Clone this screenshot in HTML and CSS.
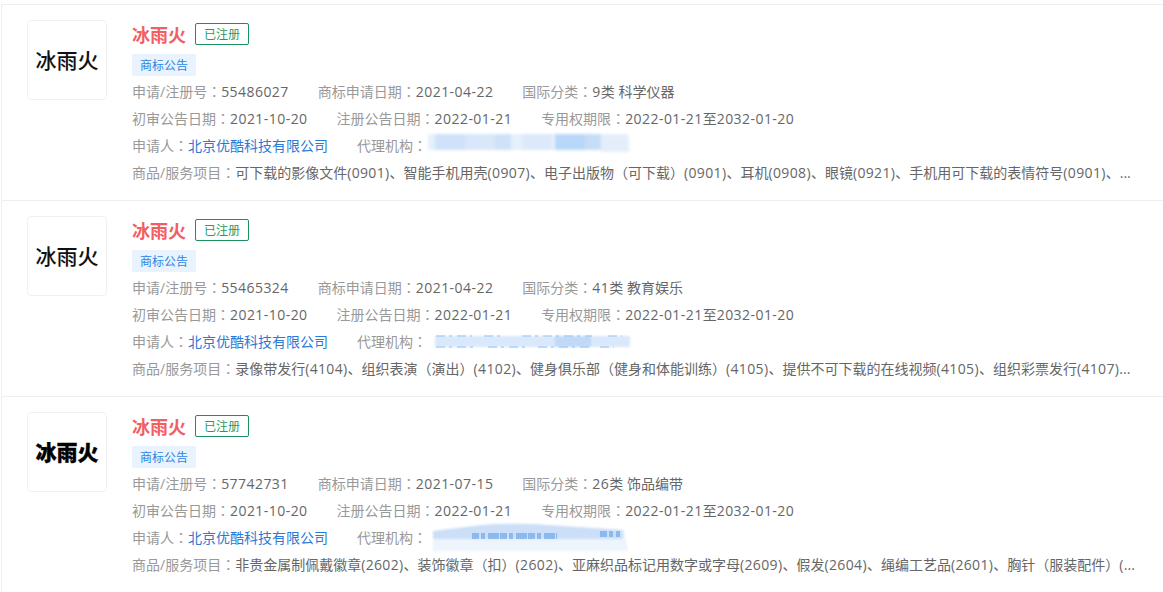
FILE: index.html
```html
<!DOCTYPE html>
<html>
<head>
    <meta charset="utf-8">
    <title>商标列表</title>
    <link rel="stylesheet" href="styles.css">
</head>
<body>
    <div class="tm-list">
        <div class="tm-item">
            <div class="tm-logo">冰雨火</div>
            <div class="tm-info">
                <div class="tm-title"><span class="tm-name">冰雨火</span><span class="tm-status">已注册</span></div>
                <div class="tm-notice"><span>商标公告</span></div>
                <div class="tm-row">
                    <span><i>申请/注册号<em>：</em></i><b>55486027</b></span>
                    <span><i>商标申请日期<em>：</em></i><b>2021-04-22</b></span>
                    <span><i>国际分类<em>：</em></i><b>9</b>类 科学仪器</span>
                </div>
                <div class="tm-row">
                    <span><i>初审公告日期<em>：</em></i><b>2021-10-20</b></span>
                    <span><i>注册公告日期<em>：</em></i><b>2022-01-21</b></span>
                    <span><i>专用权期限<em>：</em></i><b>2022-01-21</b>至<b>2032-01-20</b></span>
                </div>
                <div class="tm-row">
                    <span><i>申请人<em>：</em></i><a href="#">北京优酷科技有限公司</a></span>
                    <span class="tm-agent"><i>代理机构<em>：</em></i>
                        <svg class="smudge" width="220" height="40" viewBox="0 0 220 40">
                            <defs>
                                <filter id="soft1"><feGaussianBlur stdDeviation="1.5"/></filter>
                            </defs>
                            <g filter="url(#soft1)">
                                <rect x="6" y="8" width="200" height="16" fill="#e6f0fb"/>
                                <rect x="13" y="8" width="30" height="16" fill="#cfe2f9"/>
                                <rect x="43" y="8" width="30" height="16" fill="#d8e7fa"/>
                                <rect x="73" y="8" width="16" height="16" fill="#cfe1f8"/>
                                <rect x="100" y="8" width="30" height="16" fill="#dbe9fa"/>
                                <rect x="133" y="8" width="30" height="16" fill="#b9d7f8"/>
                                <rect x="163" y="8" width="16" height="16" fill="#c6ddf8"/>
                                <rect x="179" y="10" width="28" height="16" fill="#e4eefb"/>
                            </g>
                        </svg>
                    </span>
                </div>
                <div class="tm-row tm-goods"><span><i>商品/服务项目<em>：</em></i>可下载的影像文件<b>(0901)</b>、智能手机用壳<b>(0907)</b>、电子出版物<em>（</em>可下载<em>）</em><b>(0901)</b>、耳机<b>(0908)</b>、眼镜<b>(0921)</b>、手机用可下载的表情符号<b>(0901)</b>、...</span></div>
            </div>
        </div>

        <div class="tm-item">
            <div class="tm-logo">冰雨火</div>
            <div class="tm-info">
                <div class="tm-title"><span class="tm-name">冰雨火</span><span class="tm-status">已注册</span></div>
                <div class="tm-notice"><span>商标公告</span></div>
                <div class="tm-row">
                    <span><i>申请/注册号<em>：</em></i><b>55465324</b></span>
                    <span><i>商标申请日期<em>：</em></i><b>2021-04-22</b></span>
                    <span><i>国际分类<em>：</em></i><b>41</b>类 教育娱乐</span>
                </div>
                <div class="tm-row">
                    <span><i>初审公告日期<em>：</em></i><b>2021-10-20</b></span>
                    <span><i>注册公告日期<em>：</em></i><b>2022-01-21</b></span>
                    <span><i>专用权期限<em>：</em></i><b>2022-01-21</b>至<b>2032-01-20</b></span>
                </div>
                <div class="tm-row">
                    <span><i>申请人<em>：</em></i><a href="#">北京优酷科技有限公司</a></span>
                    <span class="tm-agent"><i>代理机构<em>：</em></i>
                        <svg class="smudge" width="220" height="40" viewBox="0 0 220 40">
                            <defs>
                                <filter id="soft2"><feGaussianBlur stdDeviation="1"/></filter>
                            </defs>
                            <g filter="url(#soft2)">
                                <rect x="13" y="14" width="195" height="11" fill="#d9e8fa"/>
                                <rect x="133" y="14" width="36" height="11" fill="#bfd9f7"/>
                            </g>
                            <g stroke="#3f8ae0" stroke-width="1" stroke-dasharray="9 4 3 5" opacity="0.5">
                                <path d="M14 14 H50 M62 14 H82 M100 14 H170 M186 14 H200"/>
                                <path d="M14 25 H56 M66 25 H104 M116 25 H170 M178 25 H192"/>
                            </g>
                        </svg>
                    </span>
                </div>
                <div class="tm-row tm-goods"><span><i>商品/服务项目<em>：</em></i>录像带发行<b>(4104)</b>、组织表演<em>（</em>演出<em>）</em><b>(4102)</b>、健身俱乐部<em>（</em>健身和体能训练<em>）</em><b>(4105)</b>、提供不可下载的在线视频<b>(4105)</b>、组织彩票发行<b>(4107)</b>...</span></div>
            </div>
        </div>

        <div class="tm-item">
            <div class="tm-logo tm-logo-heavy">冰雨火</div>
            <div class="tm-info">
                <div class="tm-title"><span class="tm-name">冰雨火</span><span class="tm-status">已注册</span></div>
                <div class="tm-notice"><span>商标公告</span></div>
                <div class="tm-row">
                    <span><i>申请/注册号<em>：</em></i><b>57742731</b></span>
                    <span><i>商标申请日期<em>：</em></i><b>2021-07-15</b></span>
                    <span><i>国际分类<em>：</em></i><b>26</b>类 饰品编带</span>
                </div>
                <div class="tm-row">
                    <span><i>初审公告日期<em>：</em></i><b>2021-10-20</b></span>
                    <span><i>注册公告日期<em>：</em></i><b>2022-01-21</b></span>
                    <span><i>专用权期限<em>：</em></i><b>2022-01-21</b>至<b>2032-01-20</b></span>
                </div>
                <div class="tm-row">
                    <span><i>申请人<em>：</em></i><a href="#">北京优酷科技有限公司</a></span>
                    <span class="tm-agent"><i>代理机构<em>：</em></i>
                        <svg class="smudge" width="220" height="40" viewBox="0 0 220 40">
                            <defs>
                                <filter id="soft3"><feGaussianBlur stdDeviation="1"/></filter>
                            </defs>
                            <g filter="url(#soft3)">
                                <path d="M11 13 L60 7 Q80 5 110 6 L202 12 L206 33 L11 33 Z" fill="#edf4fc"/>
                                <path d="M11 13 L60 7 Q80 5 110 6 L201 12 L201 21 L11 21 Z" fill="#cbdff8"/>
                            </g>
                            <g stroke="#3f8ae0" stroke-width="6" stroke-dasharray="7 2 4 3 11 1" opacity="0.45">
                                <path d="M50 18 H135"/>
                                <path d="M178 16 H198"/>
                            </g>
                        </svg>
                    </span>
                </div>
                <div class="tm-row tm-goods"><span><i>商品/服务项目<em>：</em></i>非贵金属制佩戴徽章<b>(2602)</b>、装饰徽章<em>（</em>扣<em>）</em><b>(2602)</b>、亚麻织品标记用数字或字母<b>(2609)</b>、假发<b>(2604)</b>、绳编工艺品<b>(2601)</b>、胸针<em>（</em>服装配件<em>）</em><b>(</b>...</span></div>
            </div>
        </div>
    </div>
</body>
</html>
```

FILE: styles.css
```css
body {
    margin: 0;
    padding-top: 4px;
    background: #fff;
    font-family: "Open Sans", "Noto Sans CJK SC", sans-serif;
    font-size: 14px;
    color: #666;
    overflow: hidden;
}

.tm-list {
    margin-left: 1px;
    border-left: 1px solid #eee;
    border-top: 1px solid #eee;
}

.tm-item {
    display: flex;
    gap: 25px;
    height: 195px;
    padding-left: 25px;
    border-bottom: 1px solid #eee;
}

.tm-logo {
    flex: none;
    width: 78px;
    height: 75px;
    margin-top: 15px;
    padding-bottom: 3px;
    border: 1px solid #f0f0f0;
    border-radius: 4px;
    display: flex;
    align-items: center;
    justify-content: center;
    font-family: "Noto Sans CJK SC", sans-serif;
    font-size: 21px;
    font-weight: 500;
    color: #111;
}

.tm-logo-heavy {
    font-weight: 900;
    color: #000;
    -webkit-text-stroke: 0.3px #000;
}

.tm-info {
    flex: 1;
    min-width: 0;
    padding: 18px 32px 0 0;
}

.tm-title {
    display: flex;
    align-items: center;
    gap: 9px;
    height: 22px;
}

.tm-name {
    font-family: "Noto Sans CJK SC", sans-serif;
    font-size: 18px;
    font-weight: 700;
    color: #f25f62;
}

.tm-status {
    box-sizing: border-box;
    height: 22px;
    padding: 0 8px;
    line-height: 21px;
    border: 1px solid #1c8f5f;
    border-radius: 2px;
    font-size: 12px;
    color: #2a9a5e;
}

.tm-notice {
    margin-top: 9px;
    height: 22px;
    margin-bottom: 2px;
}

.tm-notice span {
    display: inline-block;
    padding: 0 8px;
    height: 22px;
    line-height: 24px;
    background: #e8f3fe;
    border-radius: 2px;
    font-size: 12px;
    color: #2b85e4;
}

.tm-row {
    display: flex;
    gap: 29px;
    height: 27px;
    line-height: 27px;
    white-space: nowrap;
}

.tm-row i {
    font-style: normal;
    color: #999;
}

/* numbers run a little wider than Open Sans */
.tm-row b {
    font-weight: 400;
    letter-spacing: 0.45px;
}

.tm-goods b {
    letter-spacing: 0.36px;
}

/* centred full-width punctuation */
.tm-row em {
    font-style: normal;
    font-family: "Noto Sans CJK TC", sans-serif;
}

.tm-row a {
    color: #2b7ad6;
    text-decoration: none;
}

.tm-agent {
    position: relative;
}

.smudge {
    position: absolute;
    left: 65px;
    top: -6px;
}
```
